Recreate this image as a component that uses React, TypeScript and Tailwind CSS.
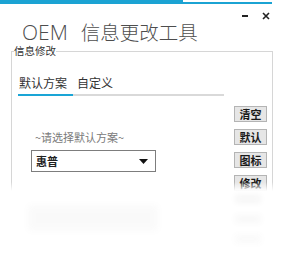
import React from 'react';

const cjk = "font-['Noto_Sans_CJK_SC','Noto_Sans',sans-serif]";

const buttons = ['清空', '默认', '图标', '修改'];

const ToolButton = ({ label }: { label: string }) => (
  <div className="flex h-[16px] w-[33px] items-center justify-center border border-[#b4b4b4] bg-[#e6e6e6] text-[11px] font-bold leading-none text-[#1a1a1a]">
    {label}
  </div>
);

const App = () => {
  return (
    <div className={`relative h-[271px] w-[281px] overflow-hidden bg-white ${cjk}`}>
      {/* accent strip */}
      <div className="flex h-[4px] items-end">
        <div className="h-[4px] w-[183px] bg-[#1ba3d3]" />
        <div className="h-[2px] w-[89px] bg-[#1ba3d3]" />
      </div>

      {/* window controls */}
      <div className="mt-[7px] flex h-[10px] items-center justify-end gap-[14px] pr-[11px]">
        <svg width="6" height="10" viewBox="0 0 6 10">
          <rect x="0" y="4" width="6" height="2" fill="#222" />
        </svg>
        <svg width="8" height="8" viewBox="0 0 8 8">
          <path d="M1 1 L7 7 M7 1 L1 7" stroke="#222" strokeWidth="1.6" />
        </svg>
      </div>

      {/* title */}
      <div className="flex h-[22px] items-center pl-[22px] text-[19.5px] font-light leading-[22px] text-[#4d4d4d]">
        <span className="font-['Open_Sans',sans-serif] text-[21px] font-light">OEM</span>
        <span className="ml-[13px]">信息更改工具</span>
      </div>

      <div className="relative h-[148px] overflow-hidden">
        <fieldset className="mx-[11px] mr-[8px] h-[160px] border border-[#d6d6d6]">
          <legend className="ml-[2px] text-[10.5px] leading-[16px] text-[#333]">信息修改</legend>

          {/* tabs */}
          <div className="mt-[16px] flex gap-[10px] pl-[7px] text-[12px] leading-[16px] text-[#333]">
            <span>默认方案</span>
            <span>自定义</span>
          </div>
          <div className="ml-[6px] mt-[3px] flex h-[2px] w-[206px]">
            <div className="h-full w-[55px] bg-[#1aa5d6]" />
            <div className="h-full flex-1 bg-[#d9d9d9]" />
          </div>

          <div className="mt-[10px] flex">
            <div className="ml-[19px] flex flex-col pt-[24px]">
              <div className="ml-[4px] text-[11px] leading-[14px] text-[#7a7a7a]">~请选择默认方案~</div>
              <div className="mt-[6px] flex h-[22px] w-[125px] items-center justify-between border border-[#7d7d7d] pl-[4px] pr-[7px]">
                <span className="text-[11px] font-bold text-[#222]">惠普</span>
                <svg width="9" height="5" viewBox="0 0 9 5">
                  <path d="M0 0 L9 0 L4.5 5 Z" fill="#111" />
                </svg>
              </div>
            </div>
            <div className="ml-auto mr-[5px] flex flex-col gap-[7px]">
              {buttons.map((b) => (
                <ToolButton key={b} label={b} />
              ))}
            </div>
          </div>
        </fieldset>
        <div className="absolute bottom-0 left-0 h-[9px] w-full bg-gradient-to-b from-transparent to-white" />
      </div>

      {/* faint reflection */}
      <div className="flex h-[80px] opacity-[0.04] blur-[3px]">
        <div className="ml-[28px] mt-[14px] h-[26px] w-[130px] rounded-sm bg-[#888]" />
        <div className="ml-auto mr-[20px] mt-[4px] flex flex-col gap-[12px]">
          <div className="h-[8px] w-[26px] bg-[#222]" />
          <div className="h-[8px] w-[26px] bg-[#555]" />
          <div className="h-[8px] w-[26px] bg-[#777]" />
        </div>
      </div>
    </div>
  );
};

export default App;
